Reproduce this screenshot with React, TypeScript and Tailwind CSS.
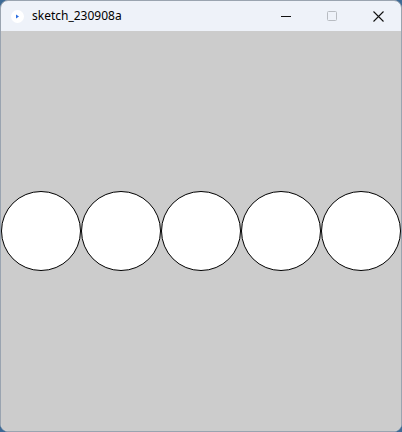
import React from 'react';

const circles = [0, 1, 2, 3, 4];

export default function App() {
  return (
    <div className="w-[402px] h-[432px] bg-[#3d6a96]">
      <div
        className="w-[402px] h-[432px] flex flex-col rounded-[8px] overflow-hidden bg-[#eef2f9] border border-[#9aa4b0]"
        style={{ fontFamily: '"Segoe UI", "Noto Sans", "Liberation Sans", sans-serif' }}
      >
        {/* Title bar */}
        <div className="h-[30px] flex items-center shrink-0">
          <div className="ml-[10px] w-[13px] h-[13px] rounded-full bg-white flex items-center justify-center">
            <svg width="5" height="5" viewBox="0 0 5 5">
              <path d="M1 0.5 L4 2.5 L1 4.5 Z" fill="#2a6de0" />
            </svg>
          </div>
          <span className="ml-[8px] text-[12px] text-black leading-none">sketch_230908a</span>
          <div className="ml-auto flex items-center h-full">
            <div className="w-[46px] h-full flex items-center justify-center">
              <svg width="10" height="10" viewBox="0 0 10 10">
                <path d="M0 5.5 H10" stroke="#111" strokeWidth="1" />
              </svg>
            </div>
            <div className="w-[46px] h-full flex items-center justify-center">
              <svg width="10" height="10" viewBox="0 0 10 10">
                <rect x="0.5" y="0.5" width="9" height="9" rx="1" fill="none" stroke="#b8bcc2" strokeWidth="1" />
              </svg>
            </div>
            <div className="w-[46px] h-full flex items-center justify-center">
              <svg width="11" height="11" viewBox="0 0 11 11">
                <path d="M0.5 0.5 L10.5 10.5 M10.5 0.5 L0.5 10.5" stroke="#111" strokeWidth="1.1" />
              </svg>
            </div>
          </div>
        </div>
        {/* Canvas */}
        <div className="w-[400px] h-[400px] bg-[#cccccc] flex items-center">
          {circles.map((i) => (
            <div key={i} className="w-[80px] h-[80px] rounded-full bg-white border border-black shrink-0" />
          ))}
        </div>
      </div>
    </div>
  );
}
